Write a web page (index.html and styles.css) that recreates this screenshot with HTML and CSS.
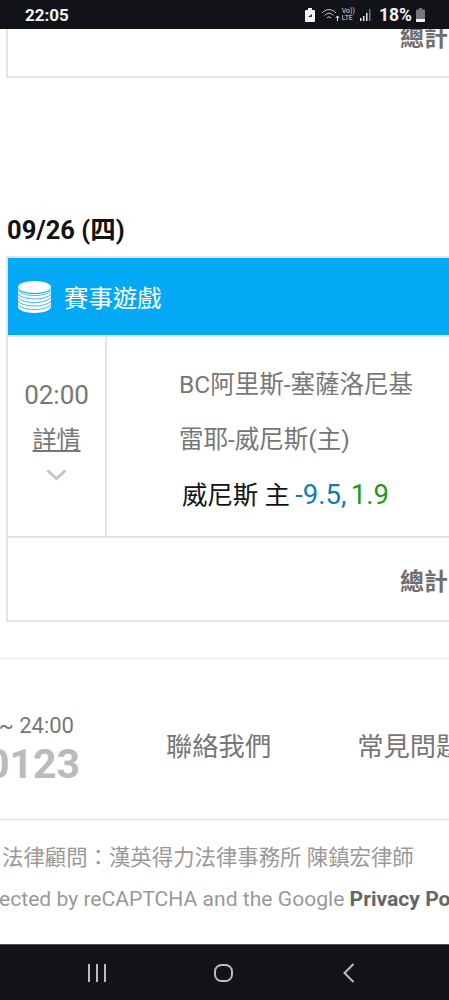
FILE: index.html
```html
<!DOCTYPE html>
<html lang="zh-Hant">
<head>
    <meta charset="UTF-8">
    <meta name="viewport" content="width=device-width, initial-scale=1.0">
    <title>賽事遊戲</title>
    <link rel="stylesheet" href="styles.css">
</head>
<body>
    <div class="status-bar">
        <span class="status-time">22:05</span>
        <div class="status-icons">
            <svg class="icon-sim" width="10" height="14" viewBox="0 0 10 14">
                <path d="M3 0h4v2h2a1 1 0 0 1 1 1v10a1 1 0 0 1-1 1H1a1 1 0 0 1-1-1V3a1 1 0 0 1 1-1h2z" fill="#f2f2f2"/>
                <path d="M3 9l4-3v3z" fill="#333"/>
            </svg>
            <svg class="icon-wifi" width="19" height="14" viewBox="0 0 19 14" fill="none" stroke="#c9c9c9" stroke-width="1">
                <path d="M1 5c4-4.500 10-4.500 14 0"/>
                <path d="M3.500 7.500c3-3 6-3 9 0"/>
                <path d="M6 10c1.500-1.500 2.500-1.500 4 0"/>
                <path d="M16.500 13V8M14.800 10l1.700-2 1.700 2" stroke="#eee"/>
            </svg>
            <span class="status-volte">Vo))<br>LTE</span>
            <svg class="icon-signal" width="12" height="12" viewBox="0 0 12 12" fill="#e6e6e6">
                <rect x="0" y="9" width="1.500" height="3"/>
                <rect x="3" y="7" width="1.500" height="5"/>
                <rect x="6" y="4" width="1.500" height="8"/>
                <rect x="9" y="0" width="1.500" height="12" fill="#777"/>
            </svg>
            <span class="status-battery">18%</span>
            <svg class="icon-battery" width="9" height="14" viewBox="0 0 9 14">
                <path d="M3 0h3v1.500h2a1 1 0 0 1 1 1V13a1 1 0 0 1-1 1H1a1 1 0 0 1-1-1V2.500a1 1 0 0 1 1-1h2z" fill="#777"/>
                <path d="M0 11h9v2a1 1 0 0 1-1 1H1a1 1 0 0 1-1-1z" fill="#f2f2f2"/>
            </svg>
        </div>
    </div>

    <main class="content">
        <section class="card card-first">
            <div class="total-row">總計</div>
        </section>

        <h2 class="date-title">09/26 (四)</h2>

        <section class="card">
            <div class="card-header">
                <svg class="icon-coins" width="33" height="32" viewBox="0 0 33 32">
                    <ellipse cx="16.500" cy="6" rx="16.500" ry="6" fill="#fff"/>
                    <path d="M0 7v19c0 3 7.500 6 16.500 6S33 29 33 26V7c0 3.500-7.500 6-16.500 6S0 10.500 0 7z" fill="#fff"/>
                    <g fill="none" stroke="#03a9f4" stroke-width="0.800">
                        <path d="M0 9.500c2 3 9 5 16.500 5s14.500-2 16.500-5"/>
                        <path d="M0 13c2 3 9 5 16.500 5S31 16 33 13"/>
                        <path d="M0 16.500c2 3 9 5 16.500 5s14.500-2 16.500-5"/>
                        <path d="M0 20c2 3 9 5 16.500 5S31 23 33 20"/>
                        <path d="M0 23.500c2 3 9 5 16.500 5s14.500-2 16.500-5"/>
                    </g>
                </svg>
                <span>賽事遊戲</span>
            </div>
            <div class="game-row">
                <div class="game-time">
                    <span class="time-text">02:00</span>
                    <a class="detail-link">詳情</a>
                    <svg class="icon-chevron" width="21" height="12" viewBox="0 0 21 12" fill="none" stroke="#c4c4c4" stroke-width="3">
                        <path d="M1.500 1.500l9 8 9-8"/>
                    </svg>
                </div>
                <div class="game-info">
                    <div class="team-line">BC阿里斯-塞薩洛尼基</div>
                    <div class="team-line">雷耶-威尼斯(主)</div>
                    <div class="bet-line">威尼斯 主 <span class="bet-spread">-9.5,</span> <span class="bet-odds">1.9</span></div>
                </div>
            </div>
            <div class="total-row">總計</div>
        </section>

        <footer class="footer">
            <div class="footer-links">
                <div class="service">
                    <span class="service-hours">~ 24:00</span>
                    <span class="service-phone">0123</span>
                </div>
                <a class="footer-link">聯絡我們</a>
                <a class="footer-link">常見問題</a>
            </div>
            <div class="legal">
                <p class="legal-line legal-cjk">法律顧問：漢英得力法律事務所 陳鎮宏律師</p>
                <p class="legal-line legal-captcha">ected by reCAPTCHA and the Google <b>Privacy Po</b></p>
            </div>
        </footer>
    </main>

    <nav class="nav-bar">
        <svg width="18" height="18" viewBox="0 0 18 18" fill="#bdbdbd">
            <rect x="0" y="0" width="2" height="18"/>
            <rect x="8" y="0" width="2" height="18"/>
            <rect x="16" y="0" width="2" height="18"/>
        </svg>
        <svg width="19" height="18" viewBox="0 0 19 18" fill="none" stroke="#bdbdbd" stroke-width="2">
            <rect x="1" y="1" width="17" height="16" rx="6.500"/>
        </svg>
        <svg width="12" height="20" viewBox="0 0 12 20" fill="none" stroke="#bdbdbd" stroke-width="2">
            <path d="M10.500 1L1.500 10l9 9"/>
        </svg>
    </nav>
</body>
</html>
```

FILE: styles.css
```css
:root {
    --bar-color: #121318;
    --line-color: #e4e4e4;
    --text-color: #777;
    --blue-color: #03a9f4;
}

* {
    box-sizing: border-box;
}

body {
    font-family: Roboto, "Noto Sans CJK TC", sans-serif;
    color: var(--text-color);
    display: flex;
    flex-direction: column;
    width: 449px;
    height: 1000px;
    margin: 0;
    overflow: hidden;
    background-color: #fff;
}

/* status bar */
.status-bar {
    display: flex;
    flex: none;
    align-items: center;
    justify-content: space-between;
    height: 29px;
    padding: 0 24px 0 25px;
    background-color: var(--bar-color);
    color: #f2f2f2;
}

.status-time {
    font-size: 17px;
    font-weight: 700;
}

.status-icons {
    display: flex;
    align-items: center;
}

.icon-wifi {
    margin-left: 6px;
}

.status-volte {
    margin-left: 2px;
    font-size: 7px;
    line-height: 7px;
    color: #ddd;
}

.icon-signal {
    margin-left: 5px;
}

.status-battery {
    margin-left: 7px;
    font-size: 17.500px;
    font-weight: 700;
}

.icon-battery {
    margin-left: 4px;
}

/* page content */
.content {
    flex: 1;
    min-height: 0;
    overflow: hidden;
}

.card {
    width: 520px;
    margin-left: 6px;
    border-left: 2px solid var(--line-color);
    border-top: 2px solid var(--line-color);
    border-bottom: 2px solid var(--line-color);
}

.card-first {
    margin-top: -37px;
}

.total-row {
    display: flex;
    align-items: center;
    height: 82px;
    padding-left: 392px;
    font-size: 24px;
    font-weight: 700;
    color: #6e6e6e;
}

.date-title {
    height: 36px;
    margin: 134px 0 8px 7px;
    font-size: 25.500px;
    font-weight: 700;
    line-height: 36px;
    color: #111;
}

.card-header {
    display: flex;
    align-items: center;
    gap: 13px;
    height: 77px;
    padding-left: 10px;
    background-color: var(--blue-color);
    color: #fff;
    font-size: 24.400px;
}

.game-row {
    display: flex;
    height: 203px;
    border-top: 2px solid var(--line-color);
    border-bottom: 2px solid var(--line-color);
}

.game-time {
    display: flex;
    flex: none;
    flex-direction: column;
    align-items: center;
    width: 99px;
    padding-top: 41px;
    border-right: 2px solid var(--line-color);
}

.time-text {
    font-size: 26px;
    line-height: 34px;
}

.detail-link {
    margin-top: 11px;
    font-size: 24px;
    line-height: 34px;
    text-decoration: underline;
}

.icon-chevron {
    margin-top: 12px;
}

.game-info {
    padding: 26px 0 0 72px;
    font-size: 24.500px;
}

.team-line {
    height: 55px;
    line-height: 44px;
}

.bet-line {
    padding-left: 3px;
    font-size: 25.400px;
    line-height: 44px;
    color: #111;
}

.bet-spread {
    margin-left: -1px;
    font-size: 27.500px;
    color: #0f7cb8;
}

.bet-odds {
    margin-left: -2px;
    font-size: 27.500px;
    color: #199a19;
}

/* footer */
.footer {
    margin-top: 36px;
    border-top: 1px solid #eee;
}

.footer-links {
    display: flex;
    align-items: center;
    gap: 86px;
    height: 161px;
    padding-top: 10px;
    border-bottom: 1px solid #ddd;
}

.service {
    display: flex;
    flex: none;
    flex-direction: column;
    align-items: flex-end;
    width: 80px;
    margin-top: 9px;
    white-space: nowrap;
}

.service-hours {
    margin-right: 6px;
    font-size: 22px;
    line-height: 30px;
}

.service-phone {
    font-size: 41px;
    font-weight: 700;
    line-height: 46px;
    color: #bbb;
}

.footer-link {
    flex: none;
    font-size: 26.300px;
    color: #777;
}

.legal {
    padding-top: 17px;
    white-space: nowrap;
}

.legal-line {
    height: 41px;
    margin: 0;
    font-size: 21.100px;
    line-height: 41px;
    color: #999;
}

.legal-cjk {
    padding-left: 2px;
    font-size: 21.400px;
}

.legal-captcha {
    margin-left: -1px;
}

.legal-captcha b {
    color: #666;
}

/* android nav */
.nav-bar {
    display: grid;
    flex: none;
    grid-template-columns: repeat(3, 126px);
    justify-content: center;
    justify-items: center;
    align-items: center;
    height: 56px;
    padding-right: 3px;
    border-top: 1px solid #555;
    background-color: var(--bar-color);
}
```
